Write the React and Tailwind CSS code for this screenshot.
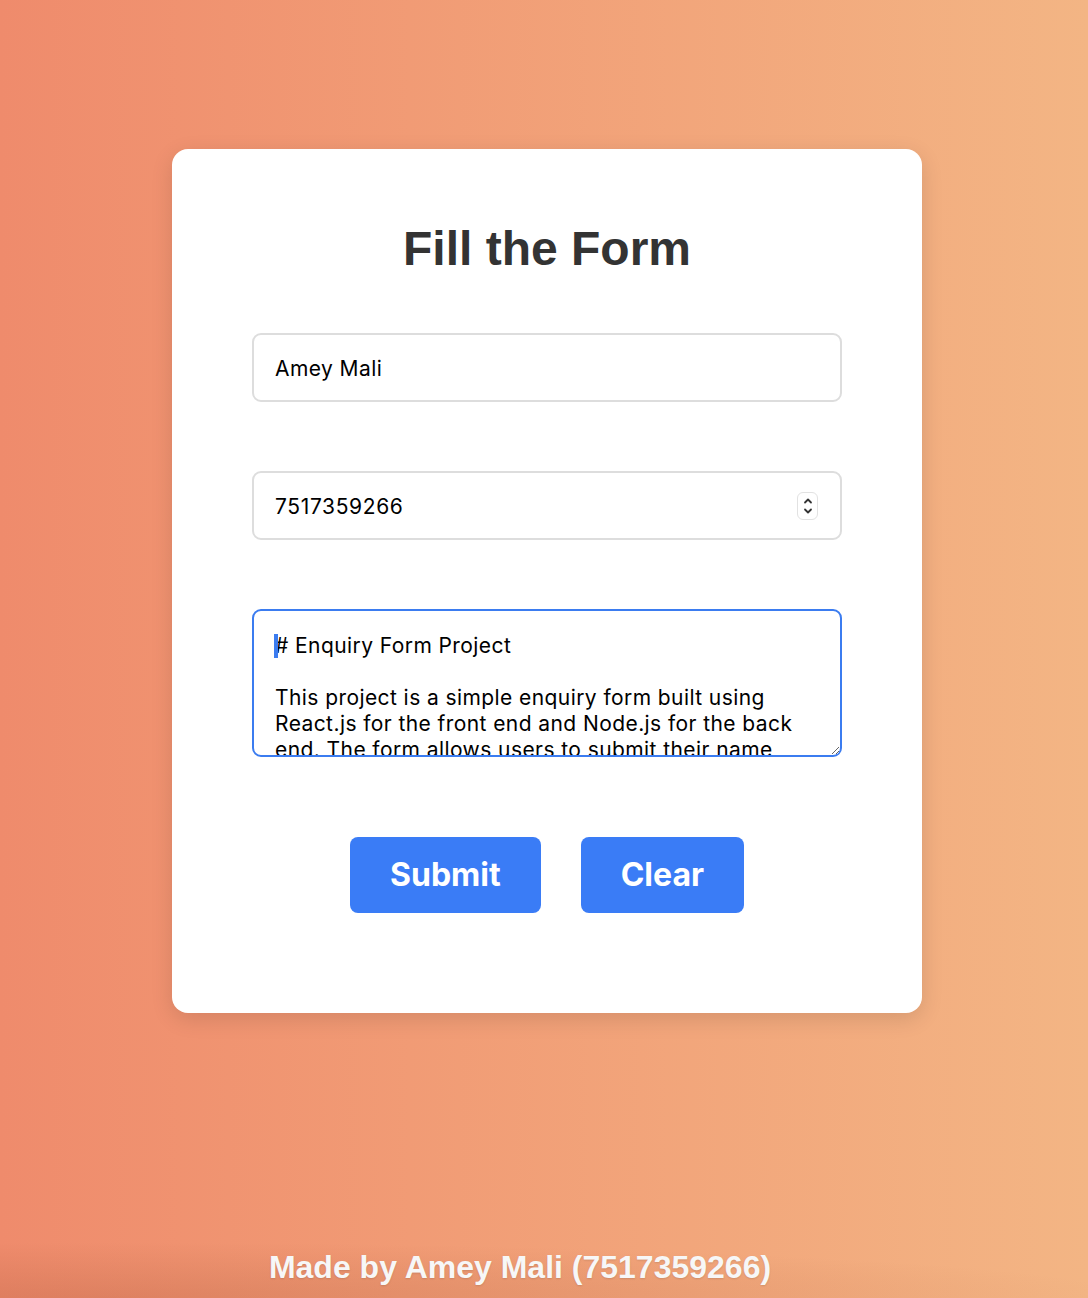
import React, { useState } from 'react';

const ABOUT = `# Enquiry Form Project

This project is a simple enquiry form built using
React.js for the front end and Node.js for the back
end. The form allows users to submit their name,
phone number and message, which are then stored
on the server.`;

const Spinner = () => (
  <div className="absolute right-[24px] top-1/2 -translate-y-1/2 w-[21px] h-[28px] rounded-[6px] border border-[#e2e2e2] bg-white flex flex-col items-center justify-center">
    <svg width="12" height="22" viewBox="0 0 12 22" fill="none" stroke="#333" strokeWidth="1.8" strokeLinecap="round" strokeLinejoin="round">
      <path d="M3 7.5 L6 4.5 L9 7.5" />
      <path d="M3 14.5 L6 17.5 L9 14.5" />
    </svg>
  </div>
);

const App = () => {
  const [name, setName] = useState('Amey Mali');
  const [phone, setPhone] = useState('7517359266');
  const [message, setMessage] = useState(ABOUT);

  const handleClear = () => {
    setName('');
    setPhone('');
    setMessage('');
  };

  return (
    <div className="relative min-h-[1298px] w-full overflow-hidden bg-gradient-to-r from-[#ef8b6c] to-[#f3b584] flex flex-col items-center pl-[6px]">
      {/* soft shade along the bottom edge */}
      <div className="pointer-events-none absolute bottom-0 left-0 w-full h-[56px] bg-[radial-gradient(ellipse_95%_100%_at_10%_100%,rgba(150,70,40,0.2),rgba(150,70,40,0)_100%)]" />

      <div className="mt-[149px] w-[750px] h-[864px] bg-white rounded-[16px] shadow-[0_6px_22px_rgba(0,0,0,0.12)] flex flex-col items-center pt-[70px]">
        <h1 className="text-[48px] leading-[60px] font-bold text-[#333333] font-['Liberation_Sans',Arial,sans-serif]">
          Fill the Form
        </h1>

        <form className="mt-[54px] w-[590px] flex flex-col font-['Inter','Noto_Sans',sans-serif] text-[21px] text-black" onSubmit={(e) => e.preventDefault()}>
          <input
            type="text"
            value={name}
            onChange={(e) => setName(e.target.value)}
            className="h-[69px] w-full rounded-[9px] border-2 border-[#dddddd] px-[21px] pt-[2px] outline-none tracking-[0.02em]"
          />

          <div className="relative mt-[69px]">
            <input
              type="text"
              inputMode="numeric"
              value={phone}
              onChange={(e) => setPhone(e.target.value)}
              className="h-[69px] w-full rounded-[9px] border-2 border-[#dddddd] px-[21px] pt-[2px] outline-none tracking-[0.03em]"
            />
            <Spinner />
          </div>

          <div className="relative mt-[69px]">
            <textarea
              value={message}
              onChange={(e) => setMessage(e.target.value)}
              wrap="off"
              className="block h-[148px] w-full rounded-[9px] border-2 border-[#3b7cf0] px-[21px] pt-[22px] leading-[26px] outline-none resize-y overflow-hidden tracking-[0.02em]"
            />
            <span className="absolute left-[22px] top-[25px] w-[4px] h-[24px] bg-[#3b7cf0]" />
          </div>

          <div className="mt-[80px] flex justify-center gap-[40px]">
            <button type="submit" className="h-[76px] px-[40px] rounded-[8px] bg-[#3a7cf6] text-white text-[32px] font-bold">
              Submit
            </button>
            <button type="button" onClick={handleClear} className="h-[76px] px-[40px] rounded-[8px] bg-[#3a7cf6] text-white text-[32px] font-bold">
              Clear
            </button>
          </div>
        </form>
      </div>

      <footer className="relative mt-auto mb-[12px] pr-[54px] text-[32px] leading-[38px] font-bold text-[#f7f7f7] font-['Liberation_Sans',Arial,sans-serif] [text-shadow:0_1px_2px_rgba(0,0,0,0.12)]">
        Made by Amey Mali (7517359266)
      </footer>
    </div>
  );
};

export default App;
